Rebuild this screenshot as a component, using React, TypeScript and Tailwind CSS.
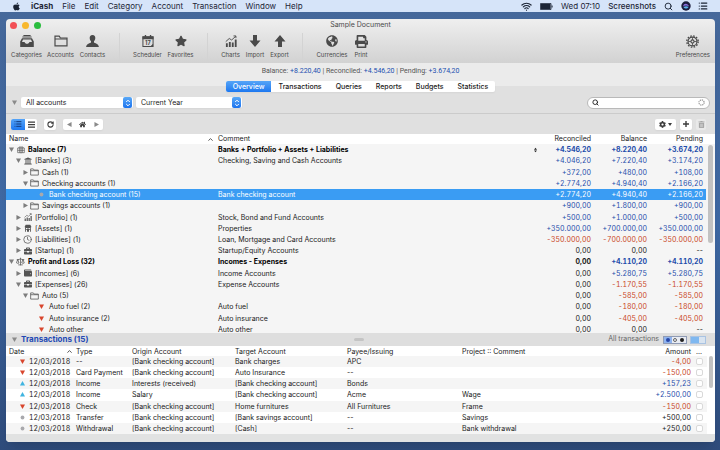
import React from "react";
import { FaApple, FaGlobeAmericas, FaPrint, FaStar, FaCog, FaHome, FaUniversity, FaBriefcase, FaWallet, FaTrashAlt } from "react-icons/fa";
import { Search, Wifi, RotateCw, Clock, List, Scale } from "lucide-react";

type IconProps = { className?: string };

const FolderIcon = ({ className }: IconProps) => (
  <svg viewBox="0 0 14 12" className={className} fill="none" stroke="currentColor" strokeWidth="1.2">
    <path d="M1 10.8V1.2h4.2l1.2 1.8H13v7.8z" />
    <path d="M1 4h12" />
  </svg>
);

const InboxIcon = ({ className }: IconProps) => (
  <svg viewBox="0 0 14 12" className={className} fill="currentColor">
    <path d="M3.4 0h7.2v1H3.4zM2.4 1.6h9.2v1H2.4z" />
    <path fillRule="evenodd" d="M2 3.2h10l1.8 3.4V12H.2V6.6zM3 4.4L2 7h2.6c.2 1.2 1.2 1.800 2.400 1.800s2.200-.6 2.400-1.800H12l-1-2.600z" />
  </svg>
);

const PersonIcon = ({ className }: IconProps) => (
  <svg viewBox="0 0 13 12" className={className} fill="currentColor">
    <path d="M6.500 0C8.500 0 9.500 1.400 9.300 3.300 9.200 4.800 8.600 5.700 8 6.300v1.100c.5.700 4.700 1 4.900 4.600H.1C.3 8.400 4.500 8.100 5 7.400V6.300C4.400 5.700 3.800 4.800 3.700 3.300 3.500 1.400 4.500 0 6.500 0z" />
  </svg>
);

const CalendarIcon = ({ className }: IconProps) => (
  <svg viewBox="0 0 13 13" className={className}>
    <path d="M1 1.800h11v10.700H1z" fill="none" stroke="currentColor" strokeWidth="1.100" />
    <path d="M.5 1.500h12v3H.5zM3 0h1.500v2H3zM8.500 0H10v2H8.500zM12 9.500v3H9z" fill="currentColor" />
    <text x="6.300" y="10.600" textAnchor="middle" fontSize="6" fontWeight="700" fontFamily="Inter, sans-serif" fill="currentColor">17</text>
  </svg>
);

const ChartIcon = ({ className }: IconProps) => (
  <svg viewBox="0 0 13 13" className={className} fill="currentColor">
    <path d="M1 9h2v4H1zM4.200 7.500h2V13h-2zM7.400 8.200h2V13h-2zM10.600 5h2v8h-2z" />
    <path d="M.8 7.200L4.600 3.800l2.600 1.600 4.400-4M9.200 1h2.600v2.400" fill="none" stroke="currentColor" strokeWidth="1" />
  </svg>
);

const DownIcon = ({ className }: IconProps) => (
  <svg viewBox="0 0 12 12" className={className} fill="currentColor">
    <path d="M4 0h4v5.500h3.500L6 12 .5 5.500H4z" />
  </svg>
);

const UpIcon = ({ className }: IconProps) => (
  <svg viewBox="0 0 12 12" className={className} fill="currentColor">
    <path d="M4 12h4V6.500h3.500L6 0 .5 6.500H4z" />
  </svg>
);

const GearRingIcon = ({ className }: IconProps) => (
  <svg viewBox="0 0 14 14" className={className} fill="none" stroke="currentColor">
    <circle cx="7" cy="7" r="6.100" strokeWidth="1.500" strokeDasharray="1.700 1.495" />
    <circle cx="7" cy="7" r="4.800" strokeWidth="1.300" />
    <circle cx="7" cy="7" r="1.700" strokeWidth="1.200" />
    <path d="M7 2.500v2.800M7 8.700v2.800M2.500 7h2.800M8.700 7h2.800" strokeWidth=".9" />
  </svg>
);

const GlobeGrid = ({ className }: IconProps) => (
  <svg viewBox="0 0 12 12" className={className} fill="none" stroke="currentColor" strokeWidth="1">
    <path d="M3 3V1.500h6V3M1 3h10v7H1zM4 3v7M6 2v9M8 3v7M1 6.500h10" />
  </svg>
);

const HouseBank = ({ className }: IconProps) => (
  <svg viewBox="0 0 12 12" className={className} fill="currentColor">
    <path fillRule="evenodd" d="M1 4l1.500-3h7L11 4v1h-.7v6.500H1.700V5H1zM3 6v1.500h1.500V6zM5.300 6v1.500h1.500V6zM7.600 6v1.500h1.500V6zM3 8.600v3h1.500v-3zM7.500 8.600v3H9v-3z" />
  </svg>
);

const Tri = ({ open, className = "" }: { open: boolean; className?: string }) => (
  <svg viewBox="0 0 6 6" className={"size-[5px] shrink-0 " + className} fill="currentColor">
    <path d={open ? "M0 .5h6L3 6z" : "M.5 0v6L6 3z"} />
  </svg>
);

const Marker = ({ kind }: { kind: string }) => (
  <svg viewBox="0 0 6 6" className="size-[5px]">
    {kind === "down" && <path d="M0 .5h6L3 6z" fill="#d8452c" />}
    {kind === "up" && <path d="M0 5.500h6L3 0z" fill="#3fb4e0" />}
    {kind === "dot" && <circle cx="3" cy="3" r="2.300" fill="#a9a9ad" />}
  </svg>
);

const Stepper = () => (
  <span className="pointer-events-none absolute inset-y-0 right-px flex w-[9px] items-center justify-center rounded-xs bg-linear-to-b from-[#5aa9f7] to-[#1a72ee] text-white">
    <svg viewBox="0 0 6 8" className="h-2 w-1.5" fill="none" stroke="currentColor" strokeWidth="1">
      <path d="M1.200 3L3 1.200 4.800 3M1.200 5L3 6.800 4.800 5" />
    </svg>
  </span>
);

const menus = ["File", "Edit", "Category", "Account", "Transaction", "Window", "Help"];

const toolGroups = [
  [
    { label: "Categories", w: "w-[31px]", icon: <InboxIcon className="h-3 w-3.5" /> },
    { label: "Accounts", w: "w-[27px]", icon: <FolderIcon className="h-3 w-3.5" /> },
    { label: "Contacts", w: "w-[27px]", icon: <PersonIcon className="h-3 w-[13px]" /> },
  ],
  [
    { label: "Scheduler", w: "w-[29px]", icon: <CalendarIcon className="size-3" /> },
    { label: "Favorites", w: "w-[27px]", icon: <FaStar className="size-3" /> },
  ],
  [
    { label: "Charts", w: "w-[19px]", icon: <ChartIcon className="size-3" /> },
    { label: "Import", w: "w-[20px]", icon: <DownIcon className="size-3" /> },
    { label: "Export", w: "w-[19px]", icon: <UpIcon className="size-3" /> },
  ],
  [
    { label: "Currencies", w: "w-[32px]", icon: <FaGlobeAmericas className="size-3" /> },
    { label: "Print", w: "w-[16px]", icon: <FaPrint className="size-[13px]" /> },
  ],
];

const tabs = ["Overview", "Transactions", "Queries", "Reports", "Budgets", "Statistics"];

type Row = { level: number; open?: boolean; icon: React.ReactNode; name: string; comment: string; v: string[]; bold?: boolean; selected?: boolean };

const folder = <FolderIcon className="h-2 w-[9px]" />;

const rows: Row[] = [
  { level: 0, open: true, icon: <GlobeGrid className="size-2" />, name: "Balance (7)", comment: "Banks + Portfolio + Assets + Liabilities", v: ["+4.546,20", "+8.220,40", "+3.674,20"], bold: true },
  { level: 1, open: true, icon: <FaUniversity className="size-2" />, name: "[Banks] (3)", comment: "Checking, Saving and Cash Accounts", v: ["+4.046,20", "+7.220,40", "+3.174,20"] },
  { level: 2, open: false, icon: folder, name: "Cash (1)", comment: "", v: ["+372,00", "+480,00", "+108,00"] },
  { level: 2, open: true, icon: folder, name: "Checking accounts (1)", comment: "", v: ["+2.774,20", "+4.940,40", "+2.166,20"] },
  { level: 3, icon: <Marker kind="dot" />, name: "Bank checking account (15)", comment: "Bank checking account", v: ["+2.774,20", "+4.940,40", "+2.166,20"], selected: true },
  { level: 2, open: false, icon: folder, name: "Savings accounts (1)", comment: "", v: ["+900,00", "+1.800,00", "+900,00"] },
  { level: 1, open: false, icon: <ChartIcon className="size-2" />, name: "[Portfolio] (1)", comment: "Stock, Bond and Fund Accounts", v: ["+500,00", "+1.000,00", "+500,00"] },
  { level: 1, open: false, icon: <HouseBank className="size-2" />, name: "[Assets] (1)", comment: "Properties", v: ["+350.000,00", "+700.000,00", "+350.000,00"] },
  { level: 1, open: false, icon: <Clock className="size-[9px]" />, name: "[Liabilities] (1)", comment: "Loan, Mortgage and Card Accounts", v: ["-350.000,00", "-700.000,00", "-350.000,00"] },
  { level: 1, open: false, icon: <FaBriefcase className="size-2" />, name: "[Startup] (1)", comment: "Startup/Equity Accounts", v: ["0,00", "0,00", "--"] },
  { level: 0, open: true, icon: <Scale className="size-[9px]" />, name: "Profit and Loss (32)", comment: "Incomes - Expenses", v: ["0,00", "+4.110,20", "+4.110,20"], bold: true },
  { level: 1, open: false, icon: <FaWallet className="size-2" />, name: "[Incomes] (6)", comment: "Income Accounts", v: ["0,00", "+5.280,75", "+5.280,75"] },
  { level: 1, open: true, icon: <FaBriefcase className="size-2" />, name: "[Expenses] (26)", comment: "Expense Accounts", v: ["0,00", "-1.170,55", "-1.170,55"] },
  { level: 2, open: true, icon: folder, name: "Auto (5)", comment: "", v: ["0,00", "-585,00", "-585,00"] },
  { level: 3, icon: <Marker kind="down" />, name: "Auto fuel (2)", comment: "Auto fuel", v: ["0,00", "-180,00", "-180,00"] },
  { level: 3, icon: <Marker kind="down" />, name: "Auto insurance (2)", comment: "Auto insurance", v: ["0,00", "-405,00", "-405,00"] },
  { level: 3, icon: <Marker kind="down" />, name: "Auto other", comment: "Auto other", v: ["0,00", "0,00", "--"] },
];

const indents = ["pl-[3px]", "pl-[10px]", "pl-[17px]", "pl-[24px]"];

const transactions = [
  ["down", "--", "[Bank checking account]", "Bank charges", "APC", "", "-4,00"],
  ["down", "Card Payment", "[Bank checking account]", "Auto Insurance", "--", "", "-150,00"],
  ["up", "Income", "Interests (received)", "[Bank checking account]", "Bonds", "", "+157,23"],
  ["up", "Income", "Salary", "[Bank checking account]", "Acme", "Wage", "+2.500,00"],
  ["down", "Check", "[Bank checking account]", "Home furnitures", "All Furnitures", "Frame", "-150,00"],
  ["dot", "Transfer", "[Bank checking account]", "[Bank savings account]", "--", "Savings", "+500,00"],
  ["dot", "Withdrawal", "[Bank checking account]", "[Cash]", "--", "Bank withdrawal", "+250,00"],
];

const tone = (v: string, neutral = false) =>
  neutral || v === "--" || v === "0,00" ? "text-[#1a1a1a]" : v[0] === "-" ? "text-[#c9471f]" : "text-[#1f4dab]";

function MenuBar() {
  return (
    <nav aria-label="Menu bar" className="flex h-3 shrink-0 items-center bg-[#d6e4f9] pr-3 pl-3 text-[8px] leading-3 text-[#1c2536]">
      <FaApple className="mr-2.5 size-[9px] text-[#1a2233]" />
      <div className="flex gap-[9px]">
        <button className="font-bold">iCash</button>
        {menus.map((m) => <button key={m}>{m}</button>)}
      </div>
      <div className="ml-auto flex items-center">
        <Wifi className="mr-2 size-[11px]" strokeWidth={2.500} />
        <svg viewBox="0 0 13 7" className="mr-2 h-[7px] w-[13px]" fill="currentColor">
          <path d="M.5.5h10.500v6H.5z" fill="none" stroke="currentColor" strokeWidth=".8" />
          <path d="M1 1h9.500v5H1zM11.600 2.500h1v2h-1z" />
        </svg>
        <span className="mr-2">Wed 07:10</span>
        <span className="mr-2 font-medium">Screenshots</span>
        <Search className="mr-2 size-[9px]" strokeWidth={2.500} />
        <svg viewBox="0 0 10 10" className="mr-[7px] size-2.5">
          <circle cx="5" cy="5" r="4.700" fill="#1b1c3c" />
          <path d="M2 5.500c1-4 5-3 6 0-2-1.500-4-1.500-6 0z" fill="#8a6fe0" />
          <path d="M2.500 6c2-1 3.500-1 5 0-1 2-4 2-5 0z" fill="#5cb3ee" />
        </svg>
        <List className="size-2.5" strokeWidth={3} />
      </div>
    </nav>
  );
}

function Toolbar() {
  return (
    <header className="h-11 shrink-0 bg-linear-to-b from-[#efefef] to-[#d2d2d2] text-[#4a4a4a]">
      <div className="grid h-3 grid-cols-[1fr_auto_1fr] items-center">
        <div className="flex gap-[5px] pl-1">
          <button aria-label="Close" className="size-[7px] rounded-full bg-[#f25056]" />
          <button aria-label="Minimize" className="size-[7px] rounded-full bg-[#f8b82e]" />
          <button aria-label="Zoom" className="size-[7px] rounded-full bg-[#2bbd3f]" />
        </div>
        <h1 className="text-[7px] leading-3">Sample Document</h1>
      </div>
      <div className="flex h-8 items-center pr-[5px] pl-[5px] text-[6px]">
        {toolGroups.map((g, i) => (
          <React.Fragment key={i}>
            {i > 0 && <span className="mx-[13px] h-7 w-px bg-[#d3d3d3]" />}
            <div className="flex gap-[5px]">
              {g.map((t) => (
                <button key={t.label} className={"flex flex-col items-center " + t.w}>
                  <span className="flex h-4 items-center">{t.icon}</span>
                  <span className="leading-3 whitespace-nowrap">{t.label}</span>
                </button>
              ))}
            </div>
          </React.Fragment>
        ))}
        <button className="ml-auto flex flex-col items-center">
          <span className="flex h-4 items-center"><GearRingIcon className="size-[13px]" /></span>
          <span className="leading-3">Preferences</span>
        </button>
      </div>
    </header>
  );
}

function Controls() {
  return (
    <section className="shrink-0 bg-[#e0e0e0]">
      <div className="h-[23px] bg-[#ebebeb] pt-1">
        <p className="text-center font-['Roboto','Liberation_Sans',sans-serif] text-[7px] leading-[9px] text-[#555]">
          Balance: <span className="text-[#2350b0]">+8.220,40</span> | Reconciled: <span className="text-[#2350b0]">+4.546,20</span> | Pending: <span className="text-[#2350b0]">+3.674,20</span>
        </p>
      </div>
      <div role="tablist" className="mx-auto -mt-[5px] flex h-[11px] w-fit overflow-hidden rounded-xs bg-white text-[7px] leading-[11px] font-medium shadow-xs">
        {tabs.map((t, i) => (
          <button key={t} role="tab" aria-selected={i === 0} className={i === 0 ? "bg-linear-to-b from-[#55a4f7] to-[#1c78f0] px-[7px] text-white" : "px-[7px] text-[#1a1a1a]"}>
            {t}
          </button>
        ))}
      </div>
      <div className="flex h-[22px] items-center border-b border-[#cbcbcb] pr-[5px] pl-[6px] text-[7px] text-[#1a1a1a]">
        <Tri open className="mr-1 text-[#8a8a8a]" />
        <div className="relative w-28">
          <select aria-label="Account" className="block h-[11px] w-full appearance-none rounded-xs bg-white px-[5px] leading-[11px] shadow-xs"><option>All accounts</option></select>
          <Stepper />
        </div>
        <div className="relative ml-[3px] w-[106px]">
          <select aria-label="Period" className="block h-[11px] w-full appearance-none rounded-xs bg-white px-[5px] leading-[11px] shadow-xs"><option>Current Year</option></select>
          <Stepper />
        </div>
        <label className="ml-auto flex h-3 w-[123px] items-center rounded-full border border-[#b9b9b9] bg-white px-1">
          <Search className="size-[7px]" strokeWidth={3} />
          <input type="search" aria-label="Search" className="min-w-0 flex-1 px-1 outline-none" />
          <svg viewBox="0 0 8 8" className="size-[7px] text-[#8a8a8a]"><circle cx="4" cy="4" r="3" fill="none" stroke="currentColor" strokeWidth="1.200" strokeDasharray="1.400 .95" /></svg>
        </label>
      </div>
      <div className="flex h-5 items-center pr-[9px] pl-[5px] text-[#3c3c3c]">
        <div className="flex h-[11px] overflow-hidden rounded-xs bg-white shadow-xs">
          <button aria-label="Tree view" className="flex w-3.5 items-center justify-center bg-linear-to-b from-[#55a4f7] to-[#1c78f0] text-[#123a7c]"><List className="size-2" strokeWidth={3} /></button>
          <button aria-label="List view" className="flex w-3 items-center justify-center">
            <svg viewBox="0 0 7 7" className="size-[7px]" fill="currentColor"><path d="M0 .5h7v1.200H0zM0 3h7v1.200H0zM0 5.500h7v1.200H0z" /></svg>
          </button>
        </div>
        <button aria-label="Reload" className="ml-[7px] flex h-[11px] w-3 items-center justify-center rounded-xs bg-white shadow-xs"><RotateCw className="size-[7px]" strokeWidth={3.500} /></button>
        <div className="ml-[7px] flex h-[11px] w-10 items-center justify-around rounded-xs bg-white shadow-xs">
          <button aria-label="Back"><Tri open={false} className="rotate-180 text-[#8a8a8a]" /></button>
          <button aria-label="Home"><FaHome className="size-[7px]" /></button>
          <button aria-label="Forward"><Tri open={false} className="text-[#8a8a8a]" /></button>
        </div>
        <button aria-label="Actions" className="ml-auto flex h-[11px] w-[21px] items-center justify-center gap-0.5 rounded-xs bg-white shadow-xs">
          <FaCog className="size-[7px]" />
          <svg viewBox="0 0 4 3" className="h-[3px] w-1" fill="currentColor"><path d="M0 0h4L2 3z" /></svg>
        </button>
        <button aria-label="Add" className="ml-1 flex h-[11px] w-3 items-center justify-center rounded-xs bg-white shadow-xs">
          <svg viewBox="0 0 6 6" className="size-1.5" fill="currentColor"><path d="M2.300 0h1.400v2.300H6v1.400H3.700V6H2.300V3.700H0V2.300h2.300z" /></svg>
        </button>
        <button aria-label="Delete" className="ml-1 flex h-[11px] w-2.5 items-center justify-center rounded-xs bg-[#e9e9e9] text-[#a5a5a5]"><FaTrashAlt className="size-[7px]" /></button>
      </div>
    </section>
  );
}

const Caret = () => (
  <svg viewBox="0 0 5 3" className="h-[3px] w-[5px]" fill="none" stroke="#444" strokeWidth=".9"><path d="M.4 2.700L2.500.6l2.100 2.100" /></svg>
);

function AccountsTable() {
  return (
    <section className="flex min-h-0 flex-1 overflow-hidden bg-[#f5f5f5] text-[7px] leading-[11px] text-[#1a1a1a]">
      <table className="h-[201px] min-w-0 flex-1 table-fixed">
        <colgroup>
          <col className="w-[212px]" />
          <col />
          <col className="w-[53px]" />
          <col className="w-14" />
          <col className="w-[59px]" />
        </colgroup>
        <thead>
          <tr className="h-2.5 bg-white leading-[10px]">
            <th className="pr-[5px] pl-[3px] font-normal"><span className="flex items-center justify-between">Name<Caret /></span></th>
            <th className="text-left font-normal">Comment</th>
            <th className="text-right font-normal">Reconciled</th>
            <th className="text-right font-normal">Balance</th>
            <th className="pr-[3px] text-right font-normal">Pending</th>
          </tr>
        </thead>
        <tbody>
          {rows.map((r, i) => (
            <tr key={i} className={(r.bold ? "font-bold text-black " : "") + (r.selected ? "bg-[#3a9cf3] text-white" : "")}>
              <td className={"p-0 " + indents[r.level]}>
                <span className="flex items-center whitespace-nowrap">
                  {r.open === undefined ? <span className="w-1.5" /> : <button aria-label={"Toggle " + r.name} className="w-1.5"><Tri open={r.open} className="text-[#7d7d7d]" /></button>}
                  <span className="mr-[3px] ml-px flex w-[9px] justify-center text-[#555]">{r.icon}</span>
                  {r.name}
                </span>
              </td>
              <td className="p-0 whitespace-nowrap">
                <span className="flex items-center justify-between">
                  {r.comment}
                  {i === 0 && (
                    <svg viewBox="0 0 4 6" className="mr-px h-1.5 w-[3px]" fill="#222"><path d="M0 2.500h4L2 0zM0 3.500h4L2 6z" /></svg>
                  )}
                </span>
              </td>
              {r.v.map((v, j) => (
                <td key={j} className={"p-0 text-right " + (j === 2 ? "pr-[3px] " : "") + (v === "--" ? "" : "tabular-nums ") + (r.selected ? "" : tone(v))}>{v}</td>
              ))}
            </tr>
          ))}
        </tbody>
      </table>
      <div className="flex w-[9px] flex-col items-center">
        <span className="h-2.5 w-full bg-white" />
        <span className="mt-px h-[98px] w-[5px] rounded-full bg-[#c2c2c2]" />
      </div>
    </section>
  );
}

function TransactionsPane() {
  return (
    <section className="shrink-0 bg-white text-[7px] text-[#1a1a1a]">
      <div className="grid h-[13px] grid-cols-[1fr_auto_1fr] items-center bg-[#dedede] pr-[9px] pl-[6px]">
        <h2 className="flex items-center gap-1 text-[8px] leading-[13px] font-bold text-[#2349b5]"><Tri open className="text-[#8a8a8a]" />Transactions (15)</h2>
        <span className="h-[3px] w-2.5 rounded-full bg-[#c4c4c4]" />
        <div className="flex items-center justify-end">
          <span className="mr-1 text-[#666]">All transactions</span>
          <div className="flex h-2 w-6 items-center justify-around border border-[#8f9bb5] bg-[#e9ecf3]">
            <button aria-label="Reconciled" className="flex h-full w-2 items-center justify-center bg-[#8fb3ee]"><span className="size-1 rounded-full bg-[#2748a8]" /></button>
            <button aria-label="Pending" className="size-1 rounded-full border border-[#666]" />
            <button aria-label="Other" className="mr-0.5 ml-0.5 size-1 rounded-full bg-[#222]" />
          </div>
          <div className="ml-[3px] flex h-2 w-4 border border-[#a9c3e2] bg-[#d9e4f0]">
            <button aria-label="Split view" className="h-full w-2 bg-[#7fb8f0]" />
          </div>
        </div>
      </div>
      <div className="flex">
        <table className="h-[88px] min-w-0 flex-1 table-fixed text-left">
          <colgroup>
            <col className="w-[70px]" />
            <col className="w-14" />
            <col className="w-[103px]" />
            <col className="w-28" />
            <col className="w-[115px]" />
            <col />
            <col className="w-[60px]" />
            <col className="w-4" />
          </colgroup>
          <thead>
            <tr className="h-2.5 leading-[9px]">
              <th className="pr-1 pl-[3px] font-normal"><span className="flex items-center justify-between">Date<Caret /></span></th>
              <th className="font-normal">Type</th>
              <th className="font-normal">Origin Account</th>
              <th className="font-normal">Target Account</th>
              <th className="font-normal">Payee/Issuing</th>
              <th className="font-normal">Project :: Comment</th>
              <th className="text-right font-normal">Amount</th>
              <th className="text-center font-normal">...</th>
            </tr>
          </thead>
          <tbody className="leading-[11px]">
            {transactions.map(([kind, type, origin, target, payee, comment, amount], i) => (
              <tr key={i} className={i % 2 ? "bg-white" : "bg-[#f5f5f5]"}>
                <td className="p-0 pl-3.5 tabular-nums"><span className="flex items-center gap-1"><Marker kind={kind} />12/03/2018</span></td>
                <td className="p-0">{type}</td>
                <td className="p-0">{origin}</td>
                <td className="p-0">{target}</td>
                <td className="p-0">{payee}</td>
                <td className="p-0">{comment}</td>
                <td className={"p-0 text-right tabular-nums " + tone(amount, kind === "dot")}>{amount}</td>
                <td className="p-0"><input type="checkbox" aria-label={"Reconcile " + target} className="mx-auto block size-[7px] appearance-none rounded-xs border border-[#d9d9d9] bg-white" /></td>
              </tr>
            ))}
          </tbody>
        </table>
        <div className="flex w-2 justify-center pt-2.5">
          <span className="h-8 w-1 rounded-full bg-[#c2c2c2]" />
        </div>
      </div>
      <div className="h-2 bg-[#e1e2e2]" />
    </section>
  );
}

export default function App() {
  return (
    <div className="flex h-screen flex-col bg-linear-to-b from-[#46689a] via-[#3f6aa6] to-[#2f4c7c] font-['Inter','Liberation_Sans',sans-serif]">
      <MenuBar />
      <main className="mt-[7px] mr-[5px] mb-2 ml-[6px] flex min-h-0 flex-1 flex-col overflow-hidden rounded-sm shadow-lg">
        <Toolbar />
        <Controls />
        <AccountsTable />
        <TransactionsPane />
      </main>
    </div>
  );
}
